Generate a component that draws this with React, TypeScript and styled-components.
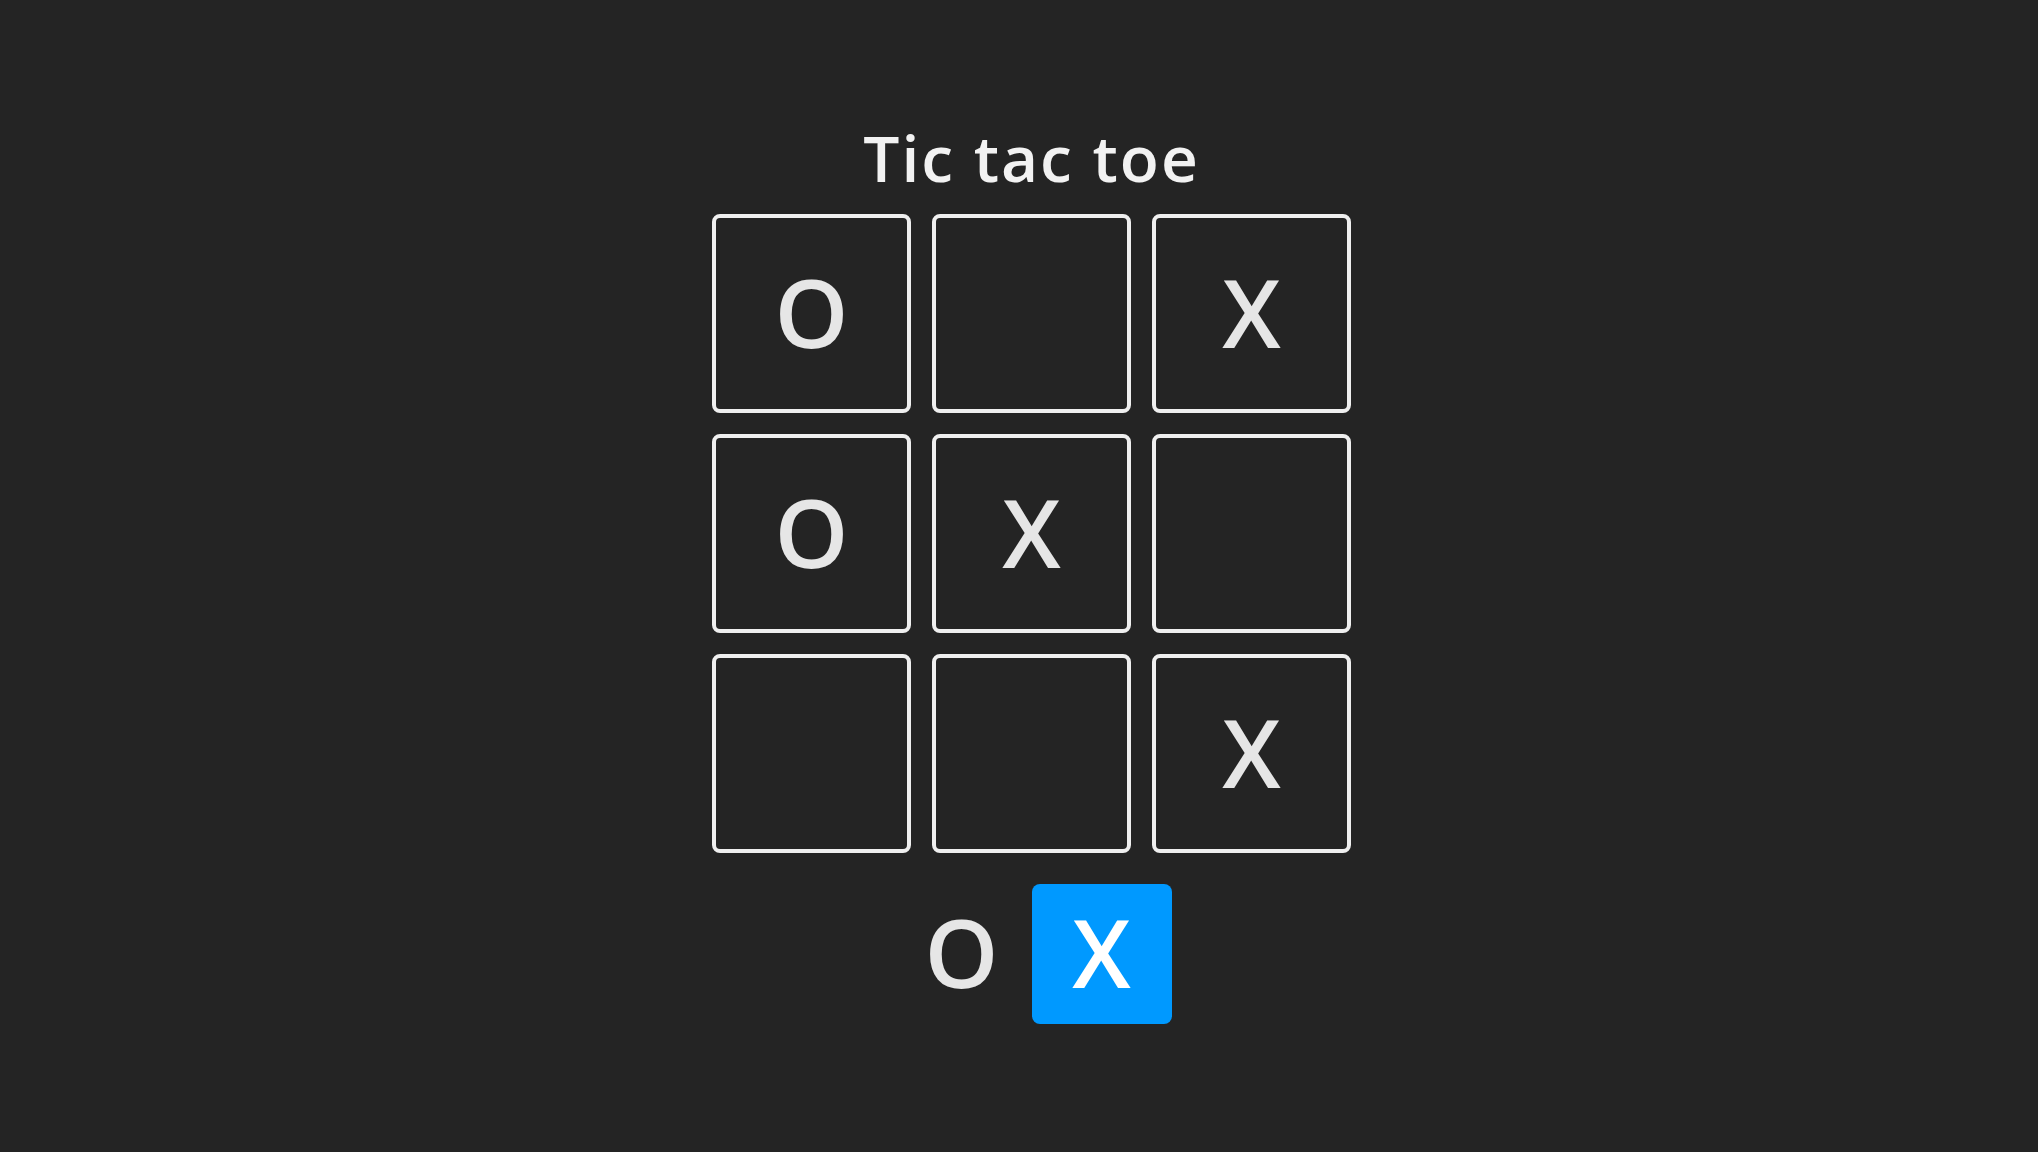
import React, { FC, useState } from 'react';
import styled, { createGlobalStyle } from 'styled-components';

type Mark = 'X' | 'O' | null;

const initialBoard: Mark[] = ['O', null, 'X', 'O', 'X', null, null, null, 'X'];

const GlobalStyle = createGlobalStyle`
  html, body {
    margin: 0;
    padding: 0;
    background: #242424;
  }
  body {
    font-family: "Open Sans", "Noto Sans", sans-serif;
    color: #f0f0f0;
  }
`;

export default function App() {
  const [board, setBoard] = useState<Mark[]>(initialBoard);
  const [player, setPlayer] = useState<'X' | 'O'>('X');

  const play = (index: number) => {
    if (board[index]) return;
    const next = [...board];
    next[index] = player;
    setBoard(next);
  };

  return (
    <>
      <GlobalStyle />
      <Page>
        <Title>Tic tac toe</Title>
        <Board>
          {board.map((mark, index) => (
            <Cell key={index} onClick={() => play(index)}>
              {mark}
            </Cell>
          ))}
        </Board>
        <PlayerSwitch>
          <PlayerButton active={player === 'O'} onClick={() => setPlayer('O')} label="O" />
          <PlayerButton active={player === 'X'} onClick={() => setPlayer('X')} label="X" />
        </PlayerSwitch>
      </Page>
    </>
  );
}

const PlayerButton: FC<{ active: boolean; label: string; onClick: () => void }> = ({ active, label, onClick }) => {
  return (
    <Choice $active={active} onClick={onClick}>
      {label}
    </Choice>
  );
};

const Page = styled.main`
  min-height: 100vh;
  box-sizing: border-box;
  padding: 126px 0 0 25px;
  display: flex;
  flex-direction: column;
  align-items: center;
`;

const Title = styled.h1`
  margin: 0;
  font-size: 64px;
  line-height: 1;
  font-weight: 600;
  letter-spacing: 2px;
  color: #f2f2f2;
`;

const Board = styled.div`
  margin-top: 24px;
  display: grid;
  grid-template-columns: repeat(3, 199px);
  grid-auto-rows: 199px;
  gap: 21px;
`;

const Cell = styled.button`
  box-sizing: border-box;
  padding: 0 0 4px;
  border: 4px solid #efefef;
  border-radius: 8px;
  background: transparent;
  color: #e6e6e6;
  font-family: inherit;
  font-size: 94px;
  font-weight: 600;
  line-height: 1;
  display: flex;
  align-items: center;
  justify-content: center;
  cursor: pointer;
`;

const PlayerSwitch = styled.div`
  margin-top: 31px;
  display: flex;
`;

const Choice = styled.button<{ $active: boolean }>`
  width: 140px;
  height: 140px;
  padding: 0 0 4px;
  border: none;
  border-radius: 8px;
  background: ${(p) => (p.$active ? '#0099ff' : 'transparent')};
  color: ${(p) => (p.$active ? '#ffffff' : '#e6e6e6')};
  font-family: inherit;
  font-size: 94px;
  font-weight: 600;
  line-height: 1;
  display: flex;
  align-items: center;
  justify-content: center;
  cursor: pointer;
`;
